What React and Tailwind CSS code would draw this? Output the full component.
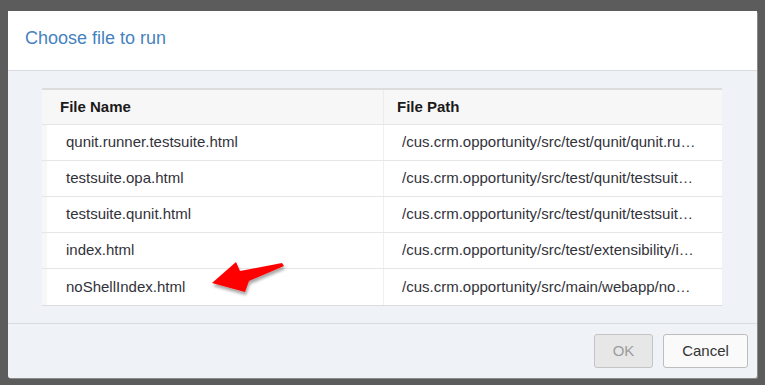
import React from "react";

const rows = [
  ["qunit.runner.testsuite.html", "/cus.crm.opportunity/src/test/qunit/qunit.runner.testsuite.html"],
  ["testsuite.opa.html", "/cus.crm.opportunity/src/test/qunit/testsuite.opa.html"],
  ["testsuite.qunit.html", "/cus.crm.opportunity/src/test/qunit/testsuite.qunit.html"],
  ["index.html", "/cus.crm.opportunity/src/test/extensibility/index.html"],
  ["noShellIndex.html", "/cus.crm.opportunity/src/main/webapp/noShellIndex.html"],
];

export default function App() {
  return (
    <div
      className="relative w-[765px] h-[385px] bg-[#5c5c5c] pt-[11px] pl-[8px]"
      style={{ fontFamily: '"Liberation Sans", Arial, sans-serif' }}
    >
      <div className="w-[749px] h-[367px] bg-[#eff2f7] flex flex-col rounded-[2px] shadow-[1px_1px_0_#8a8a8a]">
        <div className="h-[60px] shrink-0 bg-white border-b border-[#d8dbe0] flex items-center pl-[17px] pb-[4px] text-[18px] text-[#4682c0]">
          Choose file to run
        </div>
        <div className="flex-1 pt-[17px] pl-[34px] pr-[35px]">
          <div className="border-t-2 border-[#dcdcdc] border-b border-b-[#dcdcdc] text-[15px]">
            <div className="flex h-[35px] bg-[#f7f7f7] border-b border-[#e6e6e6] font-bold text-[#1a1a1a]">
              <div className="w-[342px] border-r border-[#ececec] flex items-center pl-[18px]">File Name</div>
              <div className="flex-1 flex items-center pl-[13px]">File Path</div>
            </div>
            {rows.map(([name, path], i) => (
              <div
                key={i}
                className={`flex h-[36px] bg-white text-[#32323a] ${i < rows.length - 1 ? "border-b border-[#e6e6e6]" : ""}`}
              >
                <div className="w-[342px] border-l-[5px] border-l-[#f7f7f7] border-r border-r-[#f0f0f0] flex items-center pl-[19px]">
                  {name}
                </div>
                <div className="flex-1 min-w-0 flex items-center pl-[18px] pr-[24px]">
                  <span className="truncate">{path}</span>
                </div>
              </div>
            ))}
          </div>
        </div>
        <div className="h-[55px] shrink-0 border-t border-[#d8dbe0] flex justify-end items-start pt-[10px] pr-[9px] gap-[10px] text-[15px]">
          <button className="w-[59px] h-[34px] rounded-[3px] border border-[#c4c4c4] bg-[#e7e7e7] text-[#9d9d9d]">
            OK
          </button>
          <button className="w-[85px] h-[34px] rounded-[3px] border border-[#bdbdbd] bg-[#fafafa] text-[#333]">
            Cancel
          </button>
        </div>
      </div>
      <svg className="absolute left-[200px] top-[250px]" width="100" height="50" viewBox="0 0 100 50">
        <defs>
          <filter id="sh" x="-20%" y="-20%" width="150%" height="160%">
            <feDropShadow dx="1" dy="3" stdDeviation="1.6" floodColor="#000" floodOpacity="0.35" />
          </filter>
        </defs>
        <polygon
          points="12,33 36,12 40,21 82,13 84,16 49,31 45,42"
          fill="#ff0000"
          filter="url(#sh)"
        />
      </svg>
    </div>
  );
}
